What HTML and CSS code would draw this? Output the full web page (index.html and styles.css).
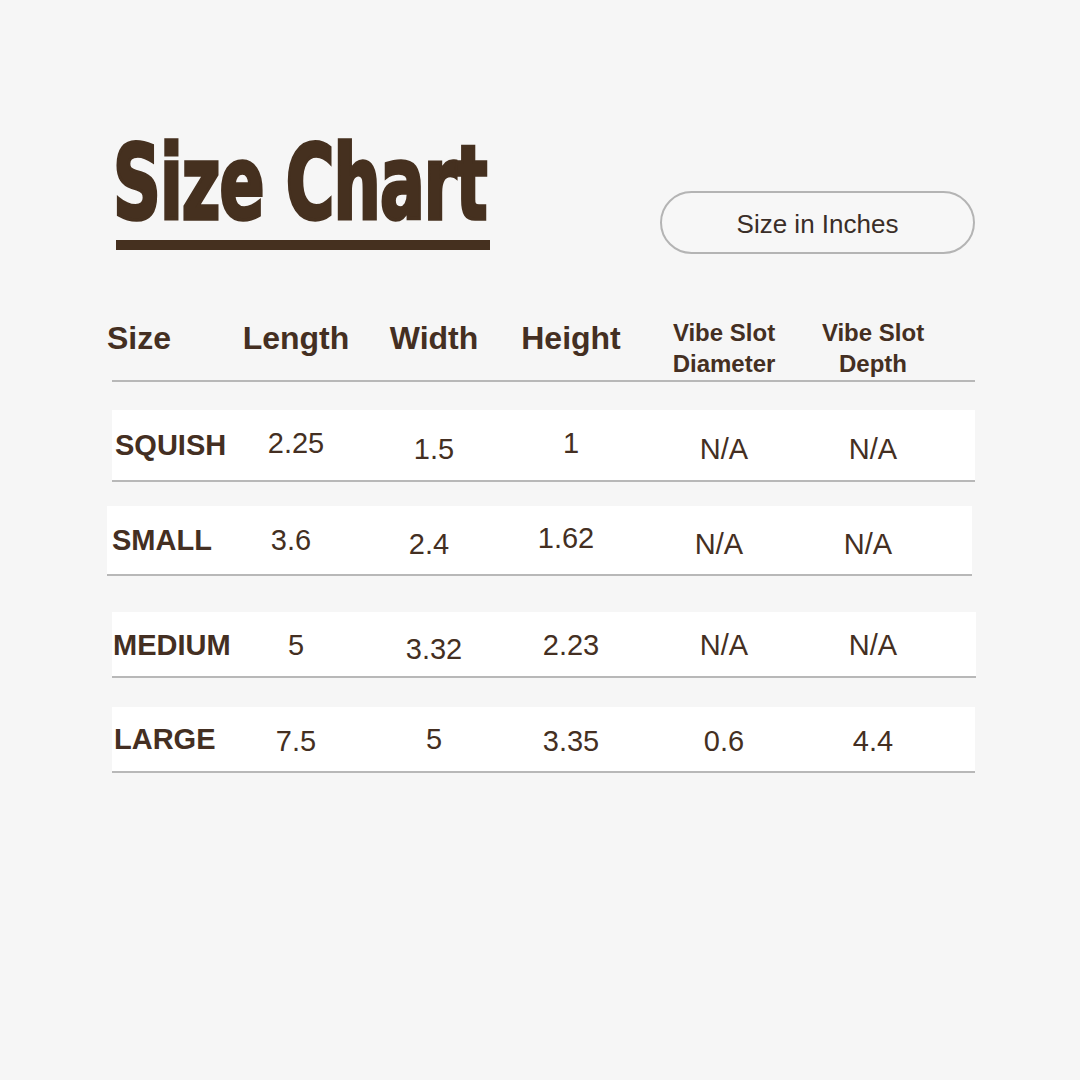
FILE: index.html
```html
<!DOCTYPE html>
<html lang="en">
<head>
<meta charset="utf-8">
<title>Size Chart</title>
<link rel="stylesheet" href="styles.css">
</head>
<body>
<div class="page">
  <div class="top">
    <div class="title-block">
      <div class="title-wrap"><h1 class="title">Size Chart</h1></div>
      <div class="title-bar"></div>
    </div>
    <div class="pill">Size in Inches</div>
  </div>

  <div class="table">
    <div class="head">
      <div class="hcell hsize">Size</div>
      <div class="hcell">Length</div>
      <div class="hcell">Width</div>
      <div class="hcell">Height</div>
      <div class="hcell small">Vibe Slot<br>Diameter</div>
      <div class="hcell small">Vibe Slot<br>Depth</div>
    </div>

    <div class="row r1">
      <div class="label">SQUISH</div>
      <div class="val up1">2.25</div>
      <div class="val lo">1.5</div>
      <div class="val up1">1</div>
      <div class="val lo">N/A</div>
      <div class="val lo">N/A</div>
    </div>

    <div class="row r2">
      <div class="label">SMALL</div>
      <div class="val">3.6</div>
      <div class="val lo">2.4</div>
      <div class="val up1">1.62</div>
      <div class="val lo">N/A</div>
      <div class="val lo">N/A</div>
    </div>

    <div class="row r3">
      <div class="label">MEDIUM</div>
      <div class="val">5</div>
      <div class="val lo">3.32</div>
      <div class="val">2.23</div>
      <div class="val">N/A</div>
      <div class="val">N/A</div>
    </div>

    <div class="row r4">
      <div class="label">LARGE</div>
      <div class="val dn2">7.5</div>
      <div class="val">5</div>
      <div class="val dn2">3.35</div>
      <div class="val dn2">0.6</div>
      <div class="val dn2">4.4</div>
    </div>
  </div>
</div>
</body>
</html>
```

FILE: styles.css
```css
* { box-sizing: border-box; }

html, body {
  margin: 0;
  padding: 0;
  background: #f6f6f6;
}

body {
  width: 1080px;
  height: 1080px;
  font-family: "Liberation Sans", Arial, sans-serif;
  color: #442f22;
}

.page {
  padding: 131px 105px 0 112px;
}

/* ---------- top ---------- */
.top {
  display: flex;
  justify-content: space-between;
  align-items: flex-start;
}

.title-block {
  display: flex;
  flex-direction: column;
}

.title-wrap {
  height: 86px;
  margin-left: 1px;
}

.title {
  display: inline-block;
  margin: 0;
  font-family: "DejaVu Sans Condensed", "DejaVu Sans", sans-serif;
  font-weight: bold;
  font-size: 86px;
  line-height: 86px;
  letter-spacing: -1px;
  color: #45301f;
  -webkit-text-stroke: 3px #45301f;
  white-space: nowrap;
  transform: scale(0.857, 1.2);
  transform-origin: left top;
}

.title-bar {
  margin-top: 23px;
  margin-left: 4px;
  width: 374px;
  height: 10px;
  background: #45301f;
}

.pill {
  margin-top: 60px;
  width: 315px;
  height: 63px;
  border: 2px solid #b4b4b4;
  border-radius: 32px;
  display: flex;
  align-items: center;
  justify-content: center;
  padding-top: 3px;
  font-size: 26px;
  color: #3a2e28;
  background: #f7f7f7;
}

/* ---------- table ---------- */
.table {
  margin-top: 66px;
  display: flex;
  flex-direction: column;
}

.head,
.row {
  display: grid;
  grid-template-columns: 114px 140px 136px 138px 168px 130px 1fr;
}

.head {
  height: 62px;
  border-bottom: 2px solid #b8b8b8;
  align-items: start;
}

.hcell {
  margin-top: -2px;
  font-weight: bold;
  font-size: 32px;
  line-height: 40px;
  text-align: center;
  white-space: nowrap;
}

.hcell.hsize {
  text-align: left;
  margin-left: -5px;
}

.hcell.small {
  margin-top: -3px;
  font-size: 24px;
  line-height: 31px;
}

.row {
  height: 72px;
  background: #ffffff;
  border-bottom: 2px solid #b8b8b8;
  align-items: center;
}

.r1 { margin-top: 28px; }
.r2 { margin-top: 24px; margin-left: -5px; margin-right: 3px; height: 70px; }
.r3 { margin-top: 36px; margin-right: -1px; height: 66px; padding-top: 2px; }
.r4 { margin-top: 29px; height: 66px; padding-top: 1px; }

.label {
  font-weight: bold;
  font-size: 29px;
  padding-left: 3px;
  white-space: nowrap;
}

.r2 .label { padding-left: 5px; }
.r3 .label { padding-left: 1px; }
.r4 .label { padding-left: 2px; }

.val {
  font-size: 29px;
  text-align: center;
  white-space: nowrap;
}

.val.lo { padding-top: 8px; }
.val.up1 { padding-bottom: 3px; }
.val.dn2 { padding-top: 4px; }
```
